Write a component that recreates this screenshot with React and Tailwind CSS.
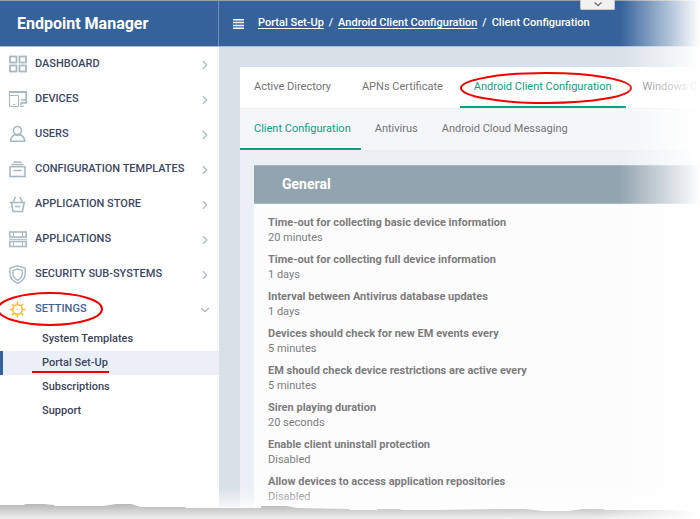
import React, { useState } from 'react';
import { ChevronRight, ChevronDown } from 'lucide-react';

const ICONS = {
  dashboard: (
    <g strokeWidth="1.8">
      <rect x="1" y="1.5" width="6.5" height="6" />
      <rect x="10.5" y="1.5" width="6.5" height="6" />
      <rect x="1" y="10.5" width="6.5" height="6" />
      <rect x="10.5" y="10.5" width="6.5" height="6" />
    </g>
  ),
  devices: (
    <g>
      <path d="M0 2H17.2V12.8H11.5" strokeWidth="1.8" />
      <path d="M12 10H17M11 16.3H14.5M11 14H12.5" />
      <path d="M0.5 2V6M0.5 5.5H9.5V16.5H0.5ZM4 14.5H6" strokeWidth="1" />
    </g>
  ),
  users: (
    <g>
      <circle cx="8.5" cy="5.5" r="4" />
      <path d="M1.5 16.2C1.5 12.8 3.5 10.8 5.8 9.5C7.5 10.6 9.5 10.6 11.2 9.5C13.5 10.8 15.7 12.8 15.7 16.2Z" />
    </g>
  ),
  templates: (
    <g>
      <rect x="1" y="6.7" width="15" height="9.8" />
      <path d="M2.5 4.5H14.5M4.5 2H12.5M4.5 10.5H12.5" />
    </g>
  ),
  store: (
    <g>
      <path d="M0.5 7.5H16.5M2.5 8L4 16.5H13.5L15 8M4.2 7L6.5 2M13.3 7L11 2M6 11.5H11.5" />
    </g>
  ),
  applications: (
    <g>
      <rect x="0.8" y="2" width="16.4" height="5" />
      <rect x="0.8" y="11.5" width="16.4" height="5" />
      <path d="M0 9.3H18M4.5 2V7M13.5 2V7M4.5 11.5V16.5M13.5 11.5V16.5" strokeWidth="1" />
    </g>
  ),
  security: (
    <g strokeWidth="1.4">
      <path d="M8.6 0.8L16.2 3V8.5C16.2 13 13 16.4 8.6 18.4C4.2 16.4 1 13 1 8.5V3Z" />
      <path d="M8.6 4L13.2 5.4V8.8C13.2 12 11.4 14 8.6 15.4C5.8 14 4 12 4 8.8V5.4Z" />
    </g>
  ),
  settings: (
    <g>
      <circle cx="8.5" cy="9.5" r="4.8" />
      <circle cx="8.5" cy="9.5" r="0.3" strokeWidth="1" />
      <path d="M8.5 4.5V1.5M8.5 14.5V17.5M3.5 9.5H0.5M13.5 9.5H16.5M5 6L3 4M12 6L14 4M5 13L3 15M12 13L14 15" />
    </g>
  ),
};

const NAV = [
  { id: 'dashboard', label: 'DASHBOARD' },
  { id: 'devices', label: 'DEVICES' },
  { id: 'users', label: 'USERS' },
  { id: 'templates', label: 'CONFIGURATION TEMPLATES' },
  { id: 'store', label: 'APPLICATION STORE' },
  { id: 'applications', label: 'APPLICATIONS' },
  { id: 'security', label: 'SECURITY SUB-SYSTEMS' },
  { id: 'settings', label: 'SETTINGS' },
];

const SUB_NAV = ['System Templates', 'Portal Set-Up', 'Subscriptions', 'Support'];

const TABS = ['Active Directory', 'APNs Certificate', 'Android Client Configuration', 'Windows C'];

const SUB_TABS = ['Client Configuration', 'Antivirus', 'Android Cloud Messaging'];

const GENERAL = [
  ['Time-out for collecting basic device information', '20 minutes'],
  ['Time-out for collecting full device information', '1 days'],
  ['Interval between Antivirus database updates', '1 days'],
  ['Devices should check for new EM events every', '5 minutes'],
  ['EM should check device restrictions are active every', '5 minutes'],
  ['Siren playing duration', '20 seconds'],
  ['Enable client uninstall protection', 'Disabled'],
  ['Allow devices to access application repositories', 'Disabled'],
];

const NavIcon = ({ id, active }) => (
  <svg
    width="18"
    height="19"
    viewBox="0 0 18 19"
    fill="none"
    stroke="currentColor"
    strokeWidth="1.6"
    className={`shrink-0 ${active ? 'text-[#f8c01c]' : 'text-[#a9b9c2]'}`}
  >
    {ICONS[id]}
  </svg>
);

const Sidebar = ({ page, onSelect }) => (
  <nav className="w-[219px] shrink-0 bg-white">
    <ul>
      {NAV.map(item => {
        const active = item.id === 'settings';
        return (
          <li key={item.id} className="relative">
            <button className="flex h-[35px] w-full items-center gap-2 pl-[9px] pr-[7px] text-left">
              <NavIcon id={item.id} active={active} />
              <span className={`flex-1 whitespace-nowrap font-medium ${active ? 'text-[#3d5f99]' : 'text-[#3d4663]'}`}>
                {item.label}
              </span>
              {active
                ? <ChevronDown size={14} className="text-[#a9b9c2]" />
                : <ChevronRight size={14} className="text-[#a9b9c2]" />}
            </button>
            {active && (
              <svg className="pointer-events-none absolute -left-1 -top-0.5" width="108" height="38" fill="none">
                <ellipse cx="54" cy="19" rx="52" ry="16" stroke="#f00000" strokeWidth="2" />
              </svg>
            )}
          </li>
        );
      })}
    </ul>
    <ul>
      {SUB_NAV.map(label => (
        <li key={label} className="relative">
          <a
            href="#"
            onClick={() => onSelect(label)}
            className={`flex h-6 items-center border-l-3 pl-[39px] font-medium text-[#3d4459] ${
              page === label ? 'border-[#35629a] bg-[#ebf0f8]' : 'border-transparent'
            }`}
          >
            {label}
          </a>
          {page === label && <span className="absolute bottom-0.5 left-8 h-0.5 w-[77px] bg-[#f00000]" />}
        </li>
      ))}
    </ul>
  </nav>
);

const TornEdge = () => (
  <svg className="relative -mt-1 block h-4 w-full shrink-0" viewBox="0 0 700 16" preserveAspectRatio="none">
    <defs>
      <linearGradient id="shade" x1="0" y1="0" x2="0" y2="1">
        <stop offset="0" stopColor="#b8b8b8" />
        <stop offset="1" stopColor="#f0f0f0" />
      </linearGradient>
      <linearGradient id="end" x1="0" y1="0" x2="1" y2="0">
        <stop offset="0.85" stopColor="#fff" stopOpacity="0" />
        <stop offset="1" stopColor="#fff" />
      </linearGradient>
    </defs>
    <path
      d="M0 2H23L26 1H44L54 2L55 3H103L116 1H131L141 4H185L186 5H261V3H286L297 5L349 6L350 7H377L378 6H400L401 7H437L500 6L525 6L543 8H568L583 6H604L605 7H675L700 10V16H0Z"
      fill="url(#shade)"
    />
    <rect y="5" width="700" height="11" fill="url(#end)" />
  </svg>
);

const App = () => {
  const [page, setPage] = useState('Portal Set-Up');
  const [tab, setTab] = useState('Android Client Configuration');
  const [subTab, setSubTab] = useState('Client Configuration');

  return (
    <div className="relative flex h-screen flex-col overflow-hidden bg-white font-['Roboto',sans-serif] text-[11px]">
      <header className="flex h-[47px] shrink-0 border-b border-t border-b-[#a9bbd0] border-t-[#9b9ea3] bg-[#35629a] text-white">
        <div className="flex w-[219px] shrink-0 items-center border-r border-[#6f90ba] pl-[17px]">
          <h1 className="text-[16px] font-bold">Endpoint Manager</h1>
        </div>
        <div className="flex items-center gap-[14px] whitespace-nowrap pl-[14px]">
          <button aria-label="Toggle menu">
            <svg width="11" height="10" stroke="currentColor" strokeWidth="1.4">
              <path d="M0 0.7H11M0 3.5H11M0 6.5H11M0 9.3H11" />
            </svg>
          </button>
          <div className="flex gap-[5px] font-medium">
            <a href="#" className="underline underline-offset-2">Portal Set-Up</a>
            <span>/</span>
            <a href="#" className="underline underline-offset-2">Android Client Configuration</a>
            <span>/</span>
            <span>Client Configuration</span>
          </div>
        </div>
        <button
          aria-label="Expand"
          className="absolute right-[85px] top-0 flex h-[10px] w-[35px] items-center justify-center rounded-b-xs border border-t-0 border-[#c8c8c8] bg-[#f1f1f1] text-[#777777]"
        >
          <svg width="8" height="5" fill="none" stroke="currentColor" strokeWidth="1.4">
            <path d="M0.5 0.5L4 3.5L7.5 0.5" />
          </svg>
        </button>
      </header>

      <div className="flex min-h-0 flex-1">
        <Sidebar page={page} onSelect={setPage} />

        <main className="min-w-0 flex-1 overflow-hidden bg-[#d8e0e8] pl-[21px] pt-5">
          <div className="flex h-full flex-col bg-[#ebf0f4]">
            <div className="flex h-[42px] shrink-0 gap-[3px] whitespace-nowrap border-b border-[#ebeef0] bg-white">
              {TABS.map(name => (
                <div key={name} className="relative flex shrink-0">
                  <button
                    onClick={() => setTab(name)}
                    className={`border-b-2 px-[14px] pt-0.5 ${
                      tab === name ? 'border-[#0d9f80] text-[#0d9f80]' : 'border-transparent text-[#747474]'
                    }`}
                  >
                    {name}
                  </button>
                  {tab === name && (
                    <svg className="pointer-events-none absolute left-0 top-1" width="172" height="34" fill="none">
                      <ellipse cx="86" cy="17" rx="85" ry="15" stroke="#f00000" strokeWidth="2" />
                    </svg>
                  )}
                </div>
              ))}
            </div>
            <div className="flex h-[42px] shrink-0 whitespace-nowrap border-b border-[#eeeeee] bg-[#f4f6f8]">
              {SUB_TABS.map(name => (
                <button
                  key={name}
                  onClick={() => setSubTab(name)}
                  className={`border-b-2 pl-[14px] pr-[10px] pt-0.5 ${
                    subTab === name ? 'border-[#0d9f80] text-[#0d9f80]' : 'border-transparent text-[#747474]'
                  }`}
                >
                  {name}
                </button>
              ))}
            </div>

            <section className="ml-[14px] mt-[14px] min-h-0 flex-1 bg-[#fcfcfc]">
              <h2 className="flex h-[39px] items-center border-y border-[#a9b7c2] bg-[#93a4b1] pl-7 text-[14px] font-bold text-white">
                General
              </h2>
              <dl className="flex flex-col gap-[7px] pl-[14px] pt-[11px] leading-[15px] text-[#7c7c7c]">
                {GENERAL.map(([title, value]) => (
                  <div key={title}>
                    <dt className="font-bold">{title}</dt>
                    <dd>{value}</dd>
                  </div>
                ))}
              </dl>
            </section>
          </div>
        </main>
      </div>

      <div className="pointer-events-none absolute inset-y-0 right-0 w-20 bg-gradient-to-r from-white/0 to-white" />
      <div className="pointer-events-none absolute bottom-[11px] left-0 right-0 h-5 bg-gradient-to-b from-white/0 to-white/80" />
      <TornEdge />
    </div>
  );
};

export default App;
